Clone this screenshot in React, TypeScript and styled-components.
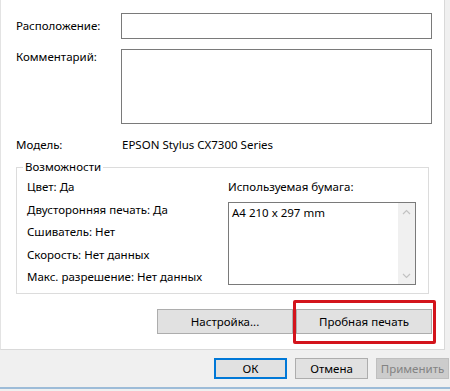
import React from 'react';
import styled, { createGlobalStyle } from 'styled-components';

const GlobalStyle = createGlobalStyle`
  html, body {
    margin: 0;
    padding: 0;
    background: #f0f0f0;
  }
  body {
    font-family: 'Noto Sans', 'Liberation Sans', sans-serif;
    font-size: 11.5px;
    color: #000;
  }
`;

const capabilities = [
  'Цвет: Да',
  'Двусторонняя печать: Да',
  'Сшиватель: Нет',
  'Скорость: Нет данных',
  'Макс. разрешение: Нет данных',
];

const ChevronUp = () => (
  <svg width="9" height="6" viewBox="0 0 9 6">
    <path d="M1 5 L4.5 1.5 L8 5" fill="none" stroke="#c2c2c2" strokeWidth="1.2" />
  </svg>
);

const ChevronDown = () => (
  <svg width="9" height="6" viewBox="0 0 9 6">
    <path d="M1 1 L4.5 4.5 L8 1" fill="none" stroke="#c2c2c2" strokeWidth="1.2" />
  </svg>
);

export default function App() {
  return (
    <>
      <GlobalStyle />
      <Window>
        <TabPage>
          <FieldRow $center>
            <Label>Расположение:</Label>
            <TextInput />
          </FieldRow>
          <FieldRow>
            <Label>Комментарий:</Label>
            <TextArea />
          </FieldRow>
          <ModelRow>
            <Label>Модель:</Label>
            <span>EPSON Stylus CX7300 Series</span>
          </ModelRow>

          <GroupBox>
            <Legend>Возможности</Legend>
            <GroupColumns>
              <CapList>
                {capabilities.map((c) => (
                  <CapItem key={c}>{c}</CapItem>
                ))}
              </CapList>
              <PaperColumn>
                <CapItem>Используемая бумага:</CapItem>
                <ListBox>
                  <ListText>A4 210 x 297 mm</ListText>
                  <ScrollBar>
                    <ChevronUp />
                    <ChevronDown />
                  </ScrollBar>
                </ListBox>
              </PaperColumn>
            </GroupColumns>
          </GroupBox>

          <ActionRow>
            <PanelButton>Настройка...</PanelButton>
            <Highlighted>
              <PanelButton>Пробная печать</PanelButton>
              <RedFrame />
            </Highlighted>
          </ActionRow>
        </TabPage>

        <Footer>
          <DialogButton $variant="default">ОК</DialogButton>
          <DialogButton>Отмена</DialogButton>
          <DialogButton $variant="disabled" disabled>
            Применить
          </DialogButton>
        </Footer>
        <WindowEdge />
      </Window>
    </>
  );
}

const Window = styled.div`
  width: 450px;
  height: 391px;
  display: flex;
  flex-direction: column;
  background: #f0f0f0;
  overflow: hidden;
`;

const TabPage = styled.div`
  box-sizing: border-box;
  width: 445px;
  height: 350px;
  background: #fff;
  border-left: 1px solid #e3e3e3;
  border-right: 1px solid #d9d9d9;
  border-bottom: 1px solid #d9d9d9;
  padding: 13px 12px 0 15px;
  display: flex;
  flex-direction: column;
`;

const FieldRow = styled.div<{ $center?: boolean }>`
  display: grid;
  grid-template-columns: 105px 1fr;
  align-items: ${({ $center }) => ($center ? 'center' : 'start')};
  margin-bottom: 10px;
`;

const Label = styled.span`
  line-height: 16px;
  white-space: nowrap;
`;

const TextInput = styled.div`
  box-sizing: border-box;
  height: 26px;
  border: 1px solid #7a7a7a;
  background: #fff;
`;

const TextArea = styled.div`
  box-sizing: border-box;
  height: 75px;
  border: 1px solid #7a7a7a;
  background: #fff;
`;

const ModelRow = styled.div`
  display: grid;
  grid-template-columns: 106px 1fr;
  line-height: 16px;
  margin-top: 3px;
`;

const GroupBox = styled.fieldset`
  box-sizing: border-box;
  margin: 6px 3px 0 0;
  padding: 1px 12px 4px 10px;
  border: 1px solid #dcdcdc;
  min-width: 0;
`;

const Legend = styled.legend`
  padding: 0 2px;
  margin-left: -4px;
  line-height: 16px;
`;

const GroupColumns = styled.div`
  display: grid;
  grid-template-columns: 201px 1fr;
`;

const CapList = styled.div`
  display: flex;
  flex-direction: column;
`;

const CapItem = styled.div`
  line-height: 22.5px;
  white-space: nowrap;
`;

const PaperColumn = styled.div`
  display: flex;
  flex-direction: column;
`;

const ListBox = styled.div`
  box-sizing: border-box;
  margin-top: 3.5px;
  height: 83px;
  border: 1px solid #7a7a7a;
  display: flex;
`;

const ListText = styled.div`
  flex: 1;
  padding: 2px 3px;
  line-height: 16px;
`;

const ScrollBar = styled.div`
  width: 17px;
  background: #f0f0f0;
  display: flex;
  flex-direction: column;
  align-items: center;
  justify-content: space-between;
  padding: 6px 0 5px;
`;

const ActionRow = styled.div`
  display: flex;
  justify-content: flex-end;
  gap: 3px;
  margin-top: 15px;
`;

const PanelButton = styled.button`
  box-sizing: border-box;
  width: 136px;
  height: 25px;
  border: 1px solid #adadad;
  background: #e1e1e1;
  font: inherit;
  color: #000;
  padding: 0;
`;

const Highlighted = styled.div`
  position: relative;
  display: flex;
`;

const RedFrame = styled.span`
  position: absolute;
  left: -3px;
  right: -4px;
  top: -9px;
  bottom: -10px;
  border: 3px solid #d3141c;
  border-radius: 2px;
  pointer-events: none;
`;

const Footer = styled.div`
  flex: 1;
  display: flex;
  justify-content: flex-end;
  align-items: flex-start;
  gap: 8px;
  padding: 8px 1px 0 0;
`;

const DialogButton = styled.button<{ $variant?: 'default' | 'disabled' }>`
  box-sizing: border-box;
  width: 73px;
  height: 21px;
  padding: 0;
  font: inherit;
  background: ${({ $variant }) => ($variant === 'disabled' ? '#cccccc' : '#e1e1e1')};
  color: ${({ $variant }) => ($variant === 'disabled' ? '#838383' : '#000')};
  border: ${({ $variant }) =>
    $variant === 'default'
      ? '2px solid #0078d7'
      : $variant === 'disabled'
      ? '1px solid #bfbfbf'
      : '1px solid #adadad'};
`;

const WindowEdge = styled.div`
  height: 2px;
  margin-bottom: 2px;
  background: #9dbcd8;
`;
